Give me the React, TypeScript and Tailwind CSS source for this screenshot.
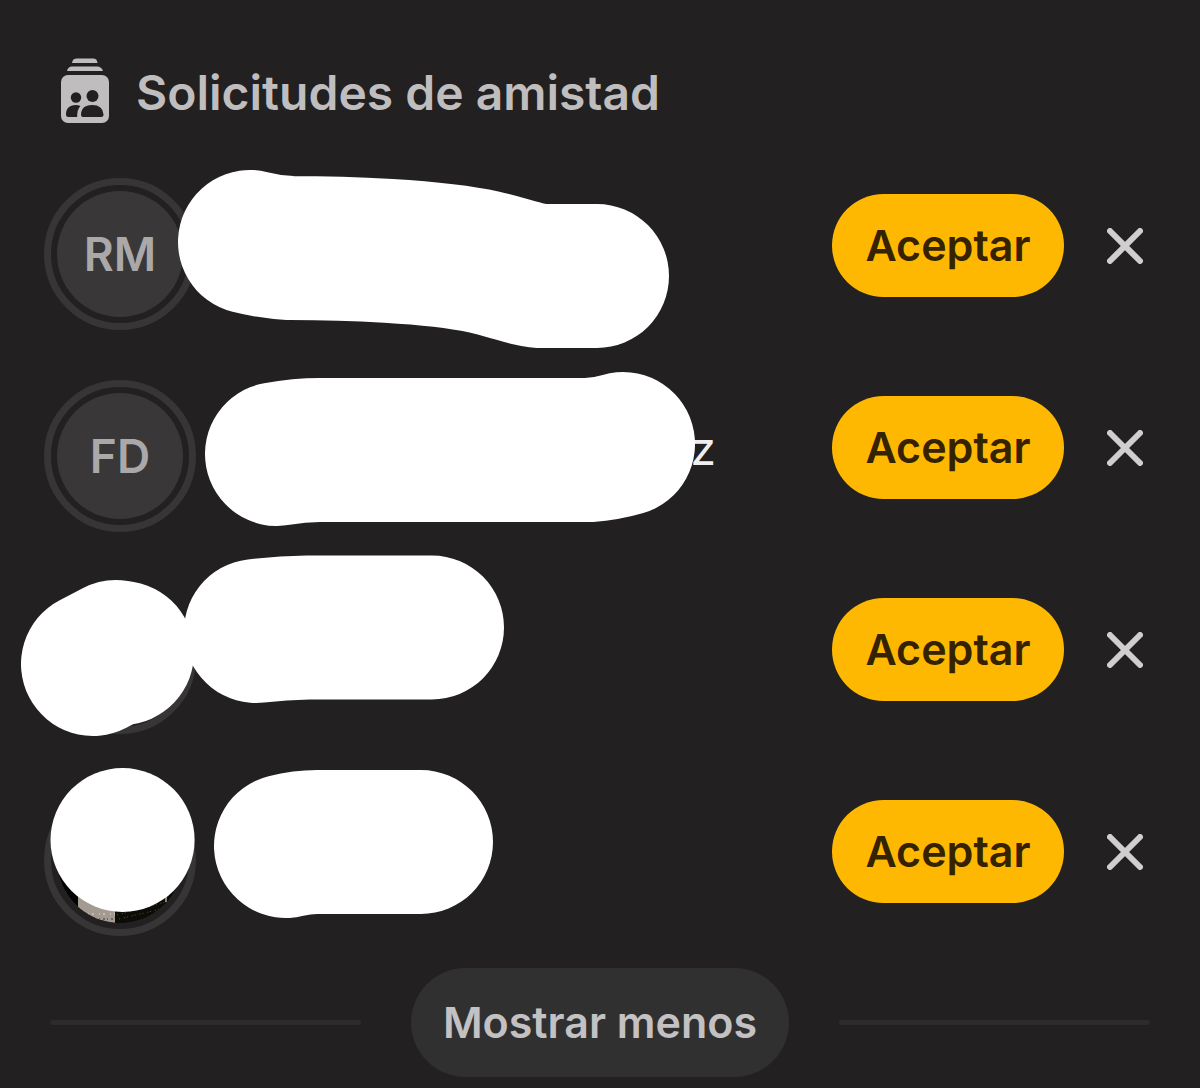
import type { ReactNode } from "react";

type FriendRequest = {
  id: number;
  initials?: string;
  photo?: boolean;
  name?: string;
  // brush strokes that hide the private parts of the row
  strokes: string[];
};

const requests: FriendRequest[] = [
  {
    id: 1,
    initials: "RM",
    strokes: ["M206 64 Q226 69 246 70 C300 70 390 73 440 84 C466 90 486 98 500 98 L553 98"],
  },
  {
    id: 2,
    initials: "FD",
    name: "z",
    strokes: ["M233 74 Q255 70 276 70 L545 70 Q562 69 579 64"],
  },
  {
    id: 3,
    strokes: ["M49 82 L72 70 L78 71", "M212 49 Q238 46 264 45.5 L388 45.5"],
  },
  {
    id: 4,
    photo: true,
    strokes: ["M78.5 56 L78.6 56", "M242 62 Q258 58 273 58 L377 58"],
  },
];

function RequestsIcon() {
  return (
    <svg viewBox="0 0 50 66" className="h-[66px] w-[50px]" aria-hidden="true">
      <g fill="#bfbdbe">
        <path d="M12 5Q12.500 .6 17 .6H33Q37 .6 37.500 5Z" />
        <path d="M7 13Q8 8.400 12 8.400H37Q41.500 8.400 43 13Z" />
        <rect x="1" y="17" width="48" height="48" rx="7" />
      </g>
      <g fill="#222021">
        <circle cx="16" cy="39.500" r="5.200" />
        <circle cx="32.500" cy="38" r="6" />
        <path d="M6 56.500C6 50.500 9.500 47 15.500 47Q18.500 47 20.500 48Q17 51.500 17.200 59H8.500Q6 59 6 56.500Z" />
        <path d="M21 57Q21 47 32 47T43.500 56.500Q43.500 59 41 59H23Q21 59 21 57Z" />
      </g>
    </svg>
  );
}

function CloseIcon() {
  return (
    <svg viewBox="0 0 36 36" className="size-9" aria-hidden="true">
      <path d="M3 3L33 33M33 3L3 33" stroke="#d0cecf" strokeWidth="6" strokeLinecap="round" />
    </svg>
  );
}

function PhotoStrip() {
  return (
    <svg viewBox="0 0 126 126" className="size-[126px]" aria-hidden="true">
      <clipPath id="photo-clip">
        <circle cx="63" cy="63" r="63" />
      </clipPath>
      <g clipPath="url(#photo-clip)">
        <rect width="126" height="126" fill="#050404" />
        <rect x="21" width="37" height="126" fill="#a39b92" />
        <rect x="58" width="54" height="126" fill="#0e0c07" />
        <path d="M24 117H58" stroke="#c4bdb4" strokeWidth="2" strokeDasharray="2 5 1 3" />
        <path d="M34 122H57" stroke="#6f675b" strokeWidth="2" strokeDasharray="1 3 2 2" />
        <path d="M60 118L112 104M62 122L104 112" stroke="#5c5334" strokeWidth="1" strokeDasharray="1 4 1 2" />
        <rect x="108" y="92" width="2" height="13" fill="#8b8478" />
      </g>
    </svg>
  );
}

function Avatar({ children }: { children?: ReactNode }) {
  return (
    <div className="flex size-38 shrink-0 items-center justify-center rounded-full border-[7px] border-[#373536]">
      <div className="flex size-[126px] shrink-0 items-center justify-center overflow-hidden rounded-full bg-[#393738] text-[46px] font-semibold text-[#aaa8a9]">
        {children}
      </div>
    </div>
  );
}

function RequestRow({ request }: { request: FriendRequest }) {
  return (
    <li className="relative flex items-start">
      <Avatar>{request.photo ? <PhotoStrip /> : request.initials}</Avatar>
      <p className="mt-8 min-w-0 max-w-[520px] flex-1 text-right text-[46px] leading-18 text-[#f0eeef]">
        {request.name}
      </p>
      <svg
        viewBox="0 0 700 152"
        className="pointer-events-none absolute top-0 left-0 h-38 w-[700px] overflow-visible"
        fill="none"
        stroke="#fff"
        strokeWidth="144"
        strokeLinecap="round"
        strokeLinejoin="round"
        aria-hidden="true"
      >
        {request.strokes.map((d) => (
          <path key={d} d={d} />
        ))}
      </svg>
      <button
        type="button"
        className="mt-4 ml-auto h-[103px] w-[232px] shrink-0 rounded-full bg-[#ffb802] text-[43px] font-semibold text-[#352200]"
      >
        Aceptar
      </button>
      <button
        type="button"
        aria-label="Rechazar"
        className="mt-4 ml-[30px] flex h-[103px] w-[62px] shrink-0 items-center justify-center"
      >
        <CloseIcon />
      </button>
    </li>
  );
}

export default function App() {
  return (
    <main className="min-h-screen bg-[#222021] px-11 pt-[58px] pb-[11px] font-['Inter','Liberation_Sans',sans-serif]">
      <header className="flex items-start gap-[26px] pl-4">
        <RequestsIcon />
        <h1 className="text-5xl leading-[70px] font-semibold text-[#bfbdbe]">
          Solicitudes de amistad
        </h1>
      </header>

      <ul className="mt-[50px] flex flex-col gap-[50px]">
        {requests.map((request) => (
          <RequestRow key={request.id} request={request} />
        ))}
      </ul>

      <div className="mx-1.5 mt-8 flex items-center gap-[50px]">
        <div className="h-[5px] flex-1 rounded-full bg-[#2d2b2c]" />
        <button
          type="button"
          className="h-[109px] w-[378px] rounded-full bg-[#313030] text-[43px] font-semibold text-[#c3c1c2]"
        >
          Mostrar menos
        </button>
        <div className="h-[5px] flex-1 rounded-full bg-[#2d2b2c]" />
      </div>
    </main>
  );
}
